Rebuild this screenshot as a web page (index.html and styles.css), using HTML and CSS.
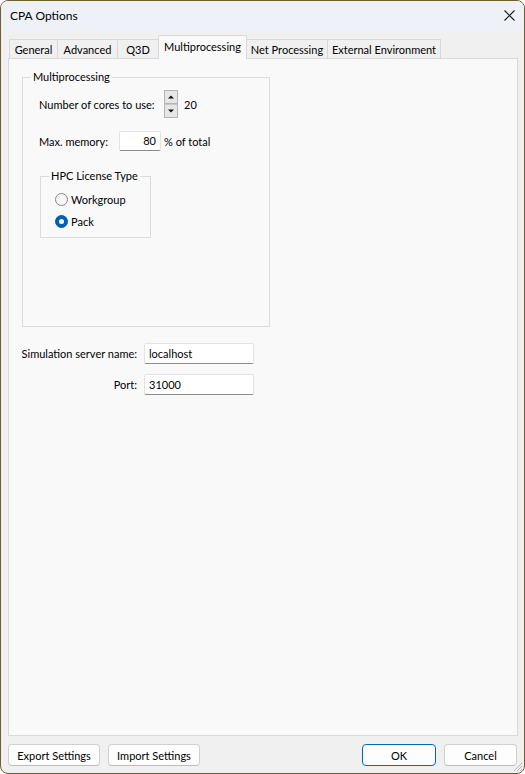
FILE: index.html
```html
<!DOCTYPE html>
<html lang="en">
<head>
<meta charset="utf-8">
<title>CPA Options</title>
<link rel="stylesheet" href="styles.css">
</head>
<body>
<div class="window">
  <div class="titlebar">
    <span class="title">CPA Options</span>
    <svg class="close" width="11" height="11" viewBox="0 0 11 11"><path d="M0.5 0.5 L10.5 10.5 M10.5 0.5 L0.5 10.5" stroke="#1b1b1b" stroke-width="1.1" fill="none"/></svg>
  </div>
  <div class="client">
    <div class="tabs">
      <div class="tab tab-general">General</div>
      <div class="tab tab-advanced">Advanced</div>
      <div class="tab tab-q3d">Q3D</div>
      <div class="tab tab-multi active">Multiprocessing</div>
      <div class="tab tab-net">Net Processing</div>
      <div class="tab tab-ext">External Environment</div>
    </div>
    <div class="panel">
      <fieldset class="group group-mp">
        <legend>Multiprocessing</legend>
        <div class="group-body mp-body">
          <div class="row row-cores">
            <span class="lbl lbl-cores">Number of cores to use:</span>
            <div class="spin">
              <div class="spin-btn"><svg width="6" height="4" viewBox="0 0 6 4"><path d="M0 3.5 L3 0.5 L6 3.5 Z" fill="#111"/></svg></div>
              <div class="spin-btn"><svg width="6" height="4" viewBox="0 0 6 4"><path d="M0 0.5 L3 3.5 L6 0.5 Z" fill="#111"/></svg></div>
            </div>
            <span class="val">20</span>
          </div>
          <div class="row row-mem">
            <span class="lbl lbl-mem">Max. memory:</span>
            <div class="field field-mem">80</div>
            <span class="unit">% of total</span>
          </div>
          <fieldset class="group group-hpc">
            <legend>HPC License Type</legend>
            <div class="group-body hpc-body">
              <div class="radio-row"><span class="radio"></span><span>Workgroup</span></div>
              <div class="radio-row"><span class="radio on"></span><span>Pack</span></div>
            </div>
          </fieldset>
        </div>
      </fieldset>
      <div class="server-grid">
        <span class="glbl">Simulation server name:</span>
        <div class="field field-wide">localhost</div>
        <span class="glbl">Port:</span>
        <div class="field field-wide">31000</div>
      </div>
    </div>
    <div class="footer">
      <button class="btn btn-wide">Export Settings</button>
      <button class="btn btn-wide btn-gap">Import Settings</button>
      <span class="spacer"></span>
      <button class="btn btn-ok">OK</button>
      <button class="btn btn-cancel btn-gap">Cancel</button>
    </div>
  </div>
  <svg class="grip" width="12" height="12" viewBox="0 0 12 12">
    <path d="M11 3 L3 11 M11 6 L6 11 M11 9 L9 11" stroke="#b8b8b8" stroke-width="1" fill="none"/>
  </svg>
</div>
</body>
</html>
```
FILE: styles.css
```css
* { box-sizing: border-box; }
html, body {
  margin: 0;
  padding: 0;
  background: #ffffff;
}
body {
  font-family: "Lato", "Noto Sans", sans-serif;
  font-size: 11px;
  color: #000;
  white-space: nowrap;
}
.window {
  position: relative;
  width: 525px;
  height: 774px;
  border: 1px solid #6f5e30;
  border-radius: 8px;
  overflow: hidden;
  background: #f0f0f0;
  display: flex;
  flex-direction: column;
}
.titlebar {
  height: 29px;
  flex: none;
  background: #eef2f8;
  display: flex;
  align-items: center;
  justify-content: space-between;
  padding: 0 9px 0 9px;
}
.title {
  font-size: 12px;
  line-height: 16px;
}
.close { display: block; }
.client {
  flex: 1;
  display: flex;
  flex-direction: column;
  padding: 5px 6px 7px 7px;
  min-height: 0;
}
.tabs {
  height: 23px;
  flex: none;
  display: flex;
  align-items: flex-end;
  padding-left: 1px;
}
.tab {
  height: 19px;
  border: 1px solid #d9d9d9;
  border-bottom: none;
  background: #f0f0f0;
  margin-left: -1px;
  text-align: center;
  line-height: 19px;
}
.tab-general { width: 49px; margin-left: 0; }
.tab-advanced { width: 61px; }
.tab-q3d { width: 42px; }
.tab-multi { width: 89px; }
.tab-net { width: 82px; }
.tab-ext { width: 114px; }
.tab.active {
  height: 24px;
  background: #f9f9f9;
  margin-bottom: -1px;
  position: relative;
  z-index: 1;
  line-height: 21px;
}
.panel {
  flex: 1;
  border: 1px solid #d9d9d9;
  background: #f9f9f9;
  min-height: 0;
}
.group {
  margin: 0;
  padding: 0;
  border: 1px solid #dcdcdc;
  min-inline-size: 0;
}
.group legend {
  padding: 0 2px;
  margin-left: 8px;
  line-height: 16px;
}
.group-mp {
  margin: 10px 0 0 13px;
  width: 248px;
  height: 258px;
}
.mp-body {
  padding: 5px 0 0 16px;
}
.row {
  display: flex;
  align-items: center;
}
.row-cores { height: 28px; }
.lbl-cores { width: 125px; }
.spin {
  width: 14px;
  height: 28px;
  display: flex;
  flex-direction: column;
}
.spin-btn {
  height: 14px;
  border: 1px solid #b4b4b4;
  background: #e6e6e6;
  display: flex;
  align-items: center;
  justify-content: center;
}
.spin-btn + .spin-btn { border-top-color: #c8c8c8; }
.spin-btn svg { display: block; }
.val { margin-left: 6px; }
.row-mem {
  margin-top: 13px;
  height: 20px;
}
.lbl-mem { width: 80px; }
.field {
  background: #ffffff;
  border: 1px solid #e3e3e3;
  border-bottom-color: #8c8c8c;
  border-radius: 2px;
  line-height: 18px;
}
.field-mem {
  width: 42px;
  height: 20px;
  text-align: right;
  padding-right: 4px;
}
.unit { margin-left: 3px; }
.group-hpc {
  margin: 17px 0 0 1px;
  width: 111px;
  height: 70px;
}
.hpc-body {
  padding: 4px 0 0 14px;
}
.radio-row {
  height: 22px;
  display: flex;
  align-items: center;
}
.radio {
  width: 13px;
  height: 13px;
  border-radius: 50%;
  border: 1px solid #858585;
  background: #f6f6f6;
  margin-right: 3px;
  flex: none;
  display: flex;
  align-items: center;
  justify-content: center;
}
.radio.on {
  border-color: #005fb8;
  background: #005fb8;
}
.radio.on::after {
  content: "";
  width: 5px;
  height: 5px;
  border-radius: 50%;
  background: #ffffff;
}
.server-grid {
  margin: 16px 0 0 12px;
  display: grid;
  grid-template-columns: 116px 110px;
  column-gap: 7px;
  row-gap: 10px;
}
.glbl {
  text-align: right;
  align-self: center;
}
.field-wide {
  height: 21px;
  padding-left: 4px;
  line-height: 19px;
}
.footer {
  margin-top: 8px;
  height: 22px;
  flex: none;
  display: flex;
}
.spacer { flex: 1; }
.btn {
  font-family: inherit;
  font-size: 11px;
  color: #000;
  height: 22px;
  padding: 0;
  margin: 0;
  background: #fdfdfd;
  border: 1px solid #d0d0d0;
  border-bottom-color: #bdbdbd;
  border-radius: 4px;
  line-height: 19px;
}
.btn-wide { width: 92px; }
.btn-gap { margin-left: 8px; }
.btn-ok {
  width: 74px;
  border: 1px solid #0067c0;
}
.btn-cancel {
  width: 73px;
  margin-right: 1px;
}
.grip {
  position: absolute;
  right: 1px;
  bottom: 1px;
}
```
